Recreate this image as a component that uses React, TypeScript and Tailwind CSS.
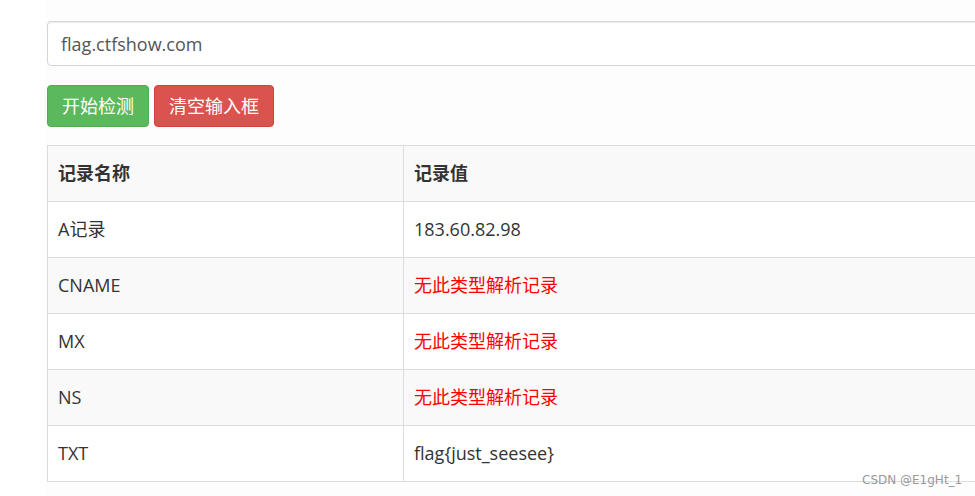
import { useState } from "react";

type DnsRow = { name: string; value: string; missing?: boolean };

const rows: DnsRow[] = [
  { name: "A记录", value: "183.60.82.98" },
  { name: "CNAME", value: "无此类型解析记录", missing: true },
  { name: "MX", value: "无此类型解析记录", missing: true },
  { name: "NS", value: "无此类型解析记录", missing: true },
  { name: "TXT", value: "flag{just_seesee}" },
];

export default function App() {
  const [domain, setDomain] = useState("flag.ctfshow.com");

  return (
    <div
      className="relative w-[975px] h-[496px] overflow-hidden bg-white text-[#333]"
      style={{ fontFamily: '"Open Sans", "Noto Sans CJK SC", sans-serif' }}
    >
      <div className="ml-[45px] w-[1100px] h-full bg-[#fdfdfd] pl-[2px] pt-[21px]">
        {/* domain input */}
        <input
          value={domain}
          onChange={(e) => setDomain(e.target.value)}
          className="block w-[1060px] h-[45px] px-[13px] rounded-[4px] border border-[#d6d6d6] bg-white text-[18px] text-[#555] shadow-[inset_0_1px_1px_rgba(0,0,0,0.075)] outline-none"
        />

        {/* actions */}
        <div className="flex gap-[5px] mt-[19px]">
          <button className="h-[42px] w-[102px] rounded-[4px] border border-[#4cae4c] bg-[#5cb85c] text-[18px] text-white">
            开始检测
          </button>
          <button
            onClick={() => setDomain("")}
            className="h-[42px] w-[120px] rounded-[4px] border border-[#d43f3a] bg-[#d9534f] text-[18px] text-white"
          >
            清空输入框
          </button>
        </div>

        {/* results */}
        <table className="mt-[18px] w-[1060px] border-collapse border border-[#ddd] text-[18px]">
          <thead>
            <tr className="bg-[#f9f9f9]">
              <th className="w-[356px] h-[56px] border border-[#ddd] px-[10px] text-left font-bold">记录名称</th>
              <th className="h-[56px] border border-[#ddd] px-[10px] text-left font-bold">记录值</th>
            </tr>
          </thead>
          <tbody>
            {rows.map((r, i) => (
              <tr key={r.name} className={i % 2 === 1 ? "bg-[#f9f9f9]" : "bg-white"}>
                <td className="h-[56px] border border-[#ddd] px-[10px]">{r.name}</td>
                <td className={`h-[56px] border border-[#ddd] px-[10px] ${r.missing ? "text-[#ff0000]" : ""}`}>
                  {r.value}
                </td>
              </tr>
            ))}
          </tbody>
        </table>
      </div>

      <span
        className="absolute left-[862px] top-[471px] text-[12px] text-[#999]"
        style={{ fontFamily: '"DejaVu Sans", sans-serif' }}
      >
        CSDN @E1gHt_1
      </span>
    </div>
  );
}
